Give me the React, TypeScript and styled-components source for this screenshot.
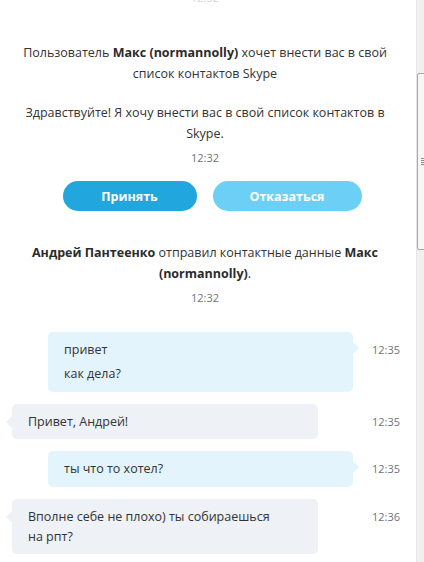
import * as React from 'react';
import styled, { createGlobalStyle, css } from 'styled-components';

const GlobalStyle = createGlobalStyle`
  html, body {
    margin: 0;
    padding: 0;
    background: #ffffff;
    overflow: hidden;
  }
  body {
    font-family: 'Segoe UI', 'Open Sans', 'Noto Sans', sans-serif;
    color: #333333;
  }
`;

const Window = styled.div`
  display: flex;
  width: 424px;
  height: 562px;
  overflow: hidden;
`;

const ChatPane = styled.div`
  flex: 1;
  display: flex;
  flex-direction: column;
  padding-right: 6px;
  overflow: hidden;
`;

const Time = styled.div<{ $faded?: boolean; $top?: number }>`
  text-align: center;
  font-size: 11px;
  line-height: 18px;
  color: ${p => (p.$faded ? '#d6d6d6' : '#6f7276')};
  margin-top: ${p => p.$top ?? 0}px;
`;

const Notice = styled.div<{ $top: number }>`
  margin-top: ${p => p.$top}px;
  text-align: center;
  font-size: 12.5px;
  line-height: 21px;
  white-space: nowrap;

  b {
    font-weight: 700;
    color: #2b2b2b;
  }
`;

const ButtonRow = styled.div`
  display: flex;
  justify-content: center;
  gap: 16px;
  margin-top: 14px;
  padding-left: 14px;
`;

const ActionButton = styled.button<{ $variant: 'accept' | 'decline' }>`
  height: 30px;
  border: none;
  border-radius: 15px;
  font-family: inherit;
  font-size: 12.5px;
  font-weight: 700;
  color: #ffffff;
  cursor: pointer;
  width: ${p => (p.$variant === 'accept' ? 134 : 149)}px;
  background: ${p => (p.$variant === 'accept' ? '#22a6de' : '#6ccff5')};
`;

const MessageList = styled.div`
  display: flex;
  flex-direction: column;
  gap: 12px;
  margin-top: 25px;
`;

const MessageRow = styled.div`
  display: grid;
  grid-template-columns: 365px 1fr;
  align-items: start;
  margin-right: -6px;
`;

const Bubble = styled.div<{ $out?: boolean }>`
  position: relative;
  border-radius: 5px;
  padding: 8px 16px 7px;
  font-size: 12.5px;
  line-height: 20px;
  color: #333333;
  display: flex;
  flex-direction: column;
  gap: 4px;
  ${p =>
    p.$out
      ? css`
          margin-left: 48px;
          width: 305px;
          box-sizing: border-box;
          background: #e3f4fc;
          padding-bottom: 8px;
          &::after {
            content: '';
            position: absolute;
            right: -6px;
            top: 10px;
            border-top: 6px solid transparent;
            border-bottom: 6px solid transparent;
            border-left: 6px solid #e3f4fc;
          }
        `
      : css`
          margin-left: 12px;
          width: 306px;
          box-sizing: border-box;
          background: #eef1f6;
          &::after {
            content: '';
            position: absolute;
            left: -6px;
            top: 12px;
            border-top: 6px solid transparent;
            border-bottom: 6px solid transparent;
            border-right: 6px solid #eef1f6;
          }
        `}
`;

const MessageTime = styled.div`
  padding: 8px 0 0 7px;
  font-size: 11px;
  line-height: 20px;
  color: #6f7276;
`;

const ScrollTrack = styled.div`
  width: 7px;
  flex-shrink: 0;
  background: #f0f0f0;
  border-left: 1px solid #e6e6e6;
  display: flex;
  flex-direction: column;
`;

const ScrollThumb = styled.div`
  margin-top: 73px;
  height: 177px;
  margin-left: 0;
  width: 12px;
  box-sizing: border-box;
  border: 1px solid #a9a9a9;
  border-radius: 2px;
  background: #f6f6f6;
  display: flex;
  align-items: center;
  padding-left: 3px;
`;

const Grip = styled.div`
  width: 3px;
  height: 7px;
  background: repeating-linear-gradient(#8a8a8a 0 1px, transparent 1px 2px);
`;

type Message = { out: boolean; lines: string[]; time: string };

const messages: Message[] = [
  { out: true, lines: ['привет', 'как дела?'], time: '12:35' },
  { out: false, lines: ['Привет, Андрей!'], time: '12:35' },
  { out: true, lines: ['ты что то хотел?'], time: '12:35' },
  { out: false, lines: ['Вполне себе не плохо) ты собираешься\nна рпт?'], time: '12:36' },
];

const Line = styled.div`
  white-space: pre-line;
`;

export default function App() {
  return (
    <>
      <GlobalStyle />
      <Window>
        <ChatPane>
          <Time $faded $top={-11}>12:32</Time>
          <Notice $top={35}>
            Пользователь <b>Макс (normannolly)</b> хочет внести вас в свой
            <br />
            список контактов Skype
          </Notice>
          <Notice $top={18}>
            Здравствуйте! Я хочу внести вас в свой список контактов в
            <br />
            Skype.
          </Notice>
          <Time $top={5}>12:32</Time>
          <ButtonRow>
            <ActionButton $variant="accept">Принять</ActionButton>
            <ActionButton $variant="decline">Отказаться</ActionButton>
          </ButtonRow>
          <Notice $top={31}>
            <b>Андрей Пантеенко</b> отправил контактные данные <b>Макс</b>
            <br />
            <b>(normannolly)</b>.
          </Notice>
          <Time $top={5}>12:32</Time>
          <MessageList>
            {messages.map((m, i) => (
              <MessageRow key={i}>
                <Bubble $out={m.out}>
                  {m.lines.map((l, j) => (
                    <Line key={j}>{l}</Line>
                  ))}
                </Bubble>
                <MessageTime>{m.time}</MessageTime>
              </MessageRow>
            ))}
          </MessageList>
        </ChatPane>
        <ScrollTrack>
          <ScrollThumb>
            <Grip />
          </ScrollThumb>
        </ScrollTrack>
      </Window>
    </>
  );
}
